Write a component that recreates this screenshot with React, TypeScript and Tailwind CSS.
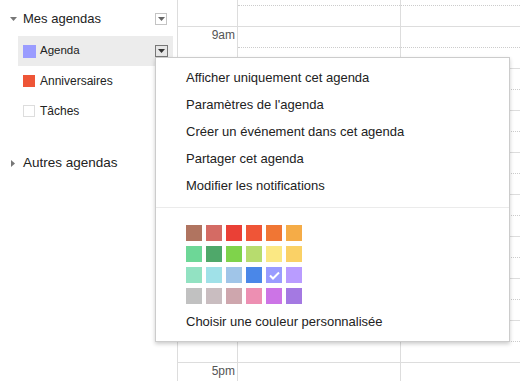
import React from "react";

const swatches: string[][] = [
  ["#b07460", "#d46b64", "#ea4036", "#ef5537", "#f07634", "#f5ac47"],
  ["#6dd797", "#4fa86a", "#7fd34b", "#b7dc6e", "#fbe883", "#fad166"],
  ["#92e2c2", "#a0e1e8", "#a0c5e8", "#4a87e8", "#9a9cff", "#b99cff"],
  ["#c1c1c1", "#c9bdc0", "#cea6ad", "#ed8fb2", "#cc74e6", "#a479e2"],
];

const hours = ["9am", "", "", "", "", "", "", "", "5pm"];

const menuItems = [
  "Afficher uniquement cet agenda",
  "Paramètres de l'agenda",
  "Créer un événement dans cet agenda",
  "Partager cet agenda",
  "Modifier les notifications",
];

function DropBox({ active }: { active?: boolean }) {
  return (
    <div
      className={
        active
          ? "w-[13px] h-[12px] border border-[#777] bg-[#e6e6e6] flex items-center justify-center"
          : "w-[12px] h-[12px] border border-[#c4c4c4] bg-white flex items-center justify-center"
      }
    >
      <svg width="7" height="4" viewBox="0 0 7 4">
        <polygon points="0,0 7,0 3.5,4" fill={active ? "#333" : "#666"} />
      </svg>
    </div>
  );
}

export default function App() {
  return (
    <div
      className="relative w-[520px] h-[381px] overflow-hidden bg-white flex text-[#222]"
      style={{ fontFamily: '"Liberation Sans", Arial, sans-serif' }}
    >
      {/* Sidebar */}
      <div className="w-[177px] shrink-0 flex flex-col pt-[6px]">
        <div className="h-[25px] flex items-center pl-[10px] pr-[10px]">
          <svg width="7" height="4" viewBox="0 0 7 4" className="mr-[6px]">
            <polygon points="0,0 7,0 3.5,4" fill="#777" />
          </svg>
          <span className="text-[13px] flex-1">Mes agendas</span>
          <DropBox />
        </div>
        <div className="mt-[5px] ml-[18px] w-[155px] h-[30px] bg-[#ececec] flex items-center pl-[5px] pr-[5px]">
          <div className="w-[13px] h-[13px] bg-[#9a9cff] mr-[4px]" />
          <span className="text-[11.5px] flex-1">Agenda</span>
          <DropBox active />
        </div>
        <div className="ml-[18px] h-[30px] flex items-center pl-[5px]">
          <div className="w-[12px] h-[12px] bg-[#ee5537] mr-[5px]" />
          <span className="text-[12px]">Anniversaires</span>
        </div>
        <div className="ml-[18px] h-[30px] flex items-center pl-[5px]">
          <div className="w-[12px] h-[12px] border border-[#ddd] bg-white mr-[5px]" />
          <span className="text-[12px]">Tâches</span>
        </div>
        <div className="mt-[25px] h-[24px] flex items-center pl-[11px]">
          <svg width="4" height="7" viewBox="0 0 4 7" className="mr-[8px]">
            <polygon points="0,0 4,3.5 0,7" fill="#777" />
          </svg>
          <span className="text-[13.5px]">Autres agendas</span>
        </div>
      </div>

      {/* Grid */}
      <div className="flex-1 flex flex-col border-l border-[#ddd]">
        <div className="h-[26px] flex shrink-0">
          <div className="w-[60px] border-r border-[#ddd]" />
          <div className="w-[163px] border-r border-[#ddd]">
            <div className="h-[6px] border-b border-dotted border-[#ccc]" />
          </div>
          <div className="flex-1">
            <div className="h-[6px] border-b border-dotted border-[#ccc]" />
          </div>
        </div>
        {hours.map((h, idx) => (
          <div key={idx} className="h-[42px] shrink-0 flex border-t border-[#ddd]">
            <div className="w-[60px] border-r border-[#ddd] text-right pr-[2px] pt-[1px] text-[12px] leading-[14px] text-[#555]">
              {h}
            </div>
            <div className="w-[163px] border-r border-[#ddd]">
              <div className="h-[21px] border-b border-dotted border-[#ccc]" />
            </div>
            <div className="flex-1">
              <div className="h-[21px] border-b border-dotted border-[#ccc]" />
            </div>
          </div>
        ))}
      </div>

      {/* Context menu */}
      <div className="absolute left-[155px] top-[57px] w-[355px] bg-white border border-[#ccc] shadow-[0_2px_4px_rgba(0,0,0,0.2)] py-[6px] text-[13px] text-[#222]">
        {menuItems.map((m) => (
          <div key={m} className="h-[27px] flex items-center pl-[30px]">
            {m}
          </div>
        ))}
        <div className="mt-[8px] h-px bg-[#ebebeb]" />
        <div className="pl-[30px] pt-[17px]">
          <div className="grid grid-cols-[repeat(6,16px)] gap-x-[4px] gap-y-[5px]">
            {swatches.flatMap((row, r) =>
              row.map((c, i) => (
                <div
                  key={`${r}-${i}`}
                  className="w-[16px] h-[16px] flex items-center justify-center"
                  style={{ backgroundColor: c }}
                >
                  {r === 2 && i === 4 ? (
                    <svg width="11" height="9" viewBox="0 0 11 9">
                      <polyline
                        points="1,4.5 4,7.5 10,1.5"
                        fill="none"
                        stroke="#fff"
                        strokeWidth="2"
                      />
                    </svg>
                  ) : null}
                </div>
              ))
            )}
          </div>
        </div>
        <div className="h-[27px] mt-[4px] flex items-center pl-[30px]">
          Choisir une couleur personnalisée
        </div>
      </div>
    </div>
  );
}
